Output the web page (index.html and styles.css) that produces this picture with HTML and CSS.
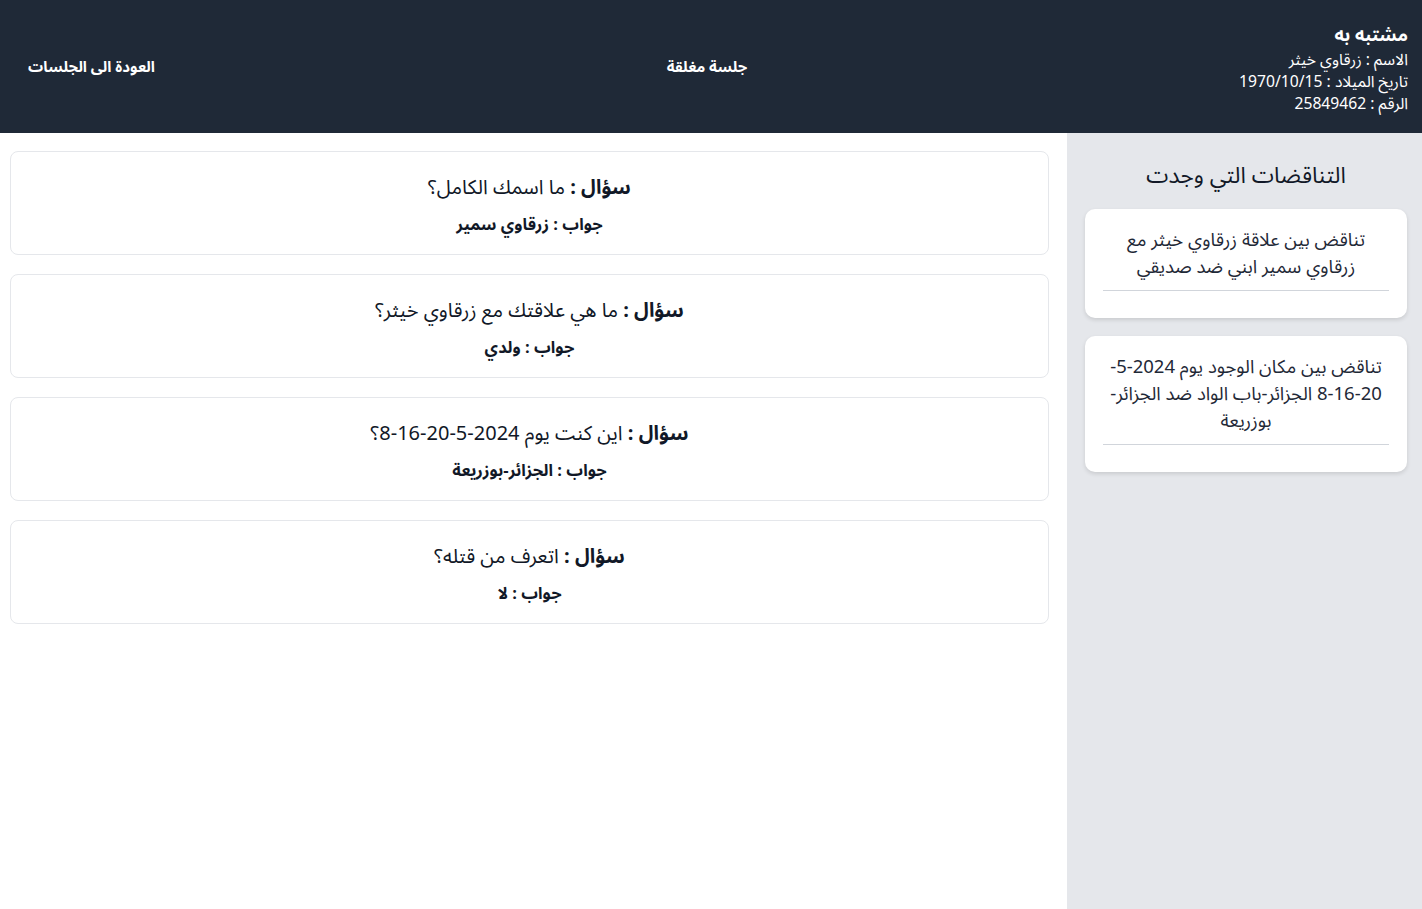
FILE: index.html
```html
<!DOCTYPE html>
<html lang="ar" dir="rtl">
<head>
<meta charset="utf-8">
<title>جلسة مغلقة</title>
<link rel="stylesheet" href="styles.css">
</head>
<body>
<header class="topbar">
  <div class="suspect">
    <div class="suspect-title">مشتبه به</div>
    <div class="suspect-line">الاسم : زرقاوي خيثر</div>
    <div class="suspect-line">تاريخ الميلاد : 1970/10/15</div>
    <div class="suspect-line">الرقم : 25849462</div>
  </div>
  <div class="session-status">جلسة مغلقة</div>
  <div class="back-cell"><a class="back-link" href="#">العودة الى الجلسات</a></div>
</header>
<div class="layout">
  <aside class="sidebar">
    <h2 class="sidebar-title">التناقضات التي وجدت</h2>
    <div class="contra-card">
      <p class="contra-text">تناقض بين علاقة زرقاوي خيثر مع زرقاوي سمير ابني ضد صديقي</p>
      <hr class="contra-rule">
    </div>
    <div class="contra-card">
      <p class="contra-text">تناقض بين مكان الوجود يوم 2024-5-20-16-8 الجزائر-باب الواد ضد الجزائر-بوزريعة</p>
      <hr class="contra-rule">
    </div>
  </aside>
  <main class="qa-list">
    <div class="qa-card">
      <div class="question"><b>سؤال :</b> ما اسمك الكامل؟</div>
      <div class="answer">جواب : زرقاوي سمير</div>
    </div>
    <div class="qa-card">
      <div class="question"><b>سؤال :</b> ما هي علاقتك مع زرقاوي خيثر؟</div>
      <div class="answer">جواب : ولدي</div>
    </div>
    <div class="qa-card">
      <div class="question"><b>سؤال :</b> اين كنت يوم 2024-5-20-16-8؟</div>
      <div class="answer">جواب : الجزائر-بوزريعة</div>
    </div>
    <div class="qa-card">
      <div class="question"><b>سؤال :</b> اتعرف من قتله؟</div>
      <div class="answer">جواب : لا</div>
    </div>
  </main>
</div>
</body>
</html>
```
FILE: styles.css
```css
* { box-sizing: border-box; }
html, body { margin: 0; padding: 0; }
body {
  font-family: "Noto Sans Arabic", "Noto Sans", "DejaVu Sans", sans-serif;
  color: #111827;
  background: #ffffff;
  height: 909px;
  display: flex;
  flex-direction: column;
}
.topbar {
  background: #1f2937;
  color: #ffffff;
  height: 133px;
  display: grid;
  grid-template-columns: 1fr auto 1fr;
  align-items: center;
  padding: 0 14px 0 6px;
}
.suspect { padding-top: 2px; }
.suspect-title { font-size: 18px; font-weight: bold; line-height: 28px; }
.suspect-line { font-size: 15.7px; line-height: 22px; }
.session-status { font-size: 15px; font-weight: bold; }
.back-cell { text-align: left; padding-left: 22px; }
.back-link {
  color: #ffffff;
  text-decoration: none;
  font-size: 15px;
  font-weight: bold;
}
.layout { flex: 1; display: flex; }
.sidebar {
  width: 355px;
  background: #e5e7eb;
  padding: 27px 15px 0 18px;
}
.sidebar-title {
  margin: 0 0 17px;
  text-align: center;
  font-size: 22.5px;
  font-weight: normal;
  line-height: 32px;
  color: #111827;
}
.contra-card {
  background: #ffffff;
  border-radius: 10px;
  box-shadow: 0 2px 4px rgba(0,0,0,0.12);
  padding: 18px 18px 27px;
  margin-bottom: 18px;
}
.contra-text {
  margin: 0 0 9px;
  text-align: center;
  font-size: 18.5px;
  line-height: 27px;
  color: #1f2937;
}
.contra-rule { border: 0; border-top: 1px solid #d1d5db; margin: 0; }
.qa-list {
  flex: 1;
  padding: 18px 18px 0 10px;
  display: flex;
  flex-direction: column;
  gap: 19px;
}
.qa-card {
  border: 1px solid #e5e7eb;
  border-radius: 8px;
  height: 104px;
  padding-top: 21px;
  text-align: center;
}
.question { font-size: 20px; line-height: 30px; }
.answer { font-size: 16.5px; font-weight: bold; line-height: 24px; margin-top: 10px; }
```
